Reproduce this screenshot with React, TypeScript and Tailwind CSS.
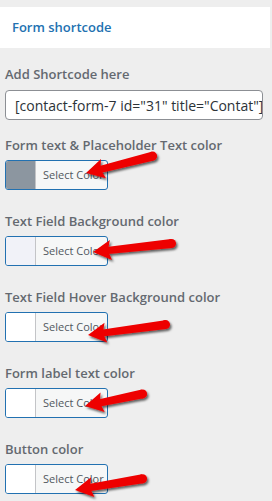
import React from "react";

type Pt = [number, number];

const arrows: { tip: Pt; tail: Pt }[] = [
  { tip: [86, 173], tail: [157, 155] },
  { tip: [93, 252], tail: [176, 243] },
  { tip: [88, 335], tail: [170, 324] },
  { tip: [85, 406], tail: [147, 393] },
  { tip: [75, 490], tail: [147, 478] },
];

function arrowShapes(tip: Pt, tail: Pt) {
  const dx = tail[0] - tip[0];
  const dy = tail[1] - tip[1];
  const len = Math.hypot(dx, dy);
  const ux = dx / len;
  const uy = dy / len;
  const nx = -uy;
  const ny = ux;
  const H = 18;
  const W = 20;
  const bx = tip[0] + ux * H;
  const by = tip[1] + uy * H;
  const head = [
    [tip[0], tip[1]],
    [bx + nx * (W / 2), by + ny * (W / 2)],
    [bx - ux * 3, by - uy * 3],
    [bx - nx * (W / 2), by - ny * (W / 2)],
  ]
    .map((p) => p.join(","))
    .join(" ");
  const sx = tip[0] + ux * (H - 6);
  const sy = tip[1] + uy * (H - 6);
  const ex = tail[0] - ux * 4.5;
  const ey = tail[1] - uy * 4.5;
  const w1 = 3.5;
  const w2 = 4.5;
  const shaft = [
    [sx + nx * w1, sy + ny * w1],
    [ex + nx * w2, ey + ny * w2],
    [ex - nx * w2, ey - ny * w2],
    [sx - nx * w1, sy - ny * w1],
  ]
    .map((p) => p.join(","))
    .join(" ");
  return { head, shaft, ex, ey, w2 };
}

function ColorButton({ swatch }: { swatch: string }) {
  return (
    <div className="flex h-[30px] w-[103px] overflow-hidden rounded-[3px] border border-[#2271b1] bg-[#f6f7f7]">
      <div className="w-[30px] shrink-0 border-r border-[#c3c4c7]" style={{ backgroundColor: swatch }} />
      <div className="flex min-w-0 flex-1 items-center overflow-hidden whitespace-nowrap pl-[7px] text-[11px] text-[#50575e]">
        Select Color
      </div>
    </div>
  );
}

const sections = [
  { label: "Form text & Placeholder Text color", swatch: "#8c96a0" },
  { label: "Text Field Background color", swatch: "#f1f2f8" },
  { label: "Text Field Hover Background color", swatch: "#ffffff" },
  { label: "Form label text color", swatch: "#ffffff" },
  { label: "Button color", swatch: "#ffffff" },
];

export default function App() {
  return (
    <div
      className="relative h-[501px] w-[272px] overflow-hidden bg-[#eeeeee] pt-[7px]"
      style={{ fontFamily: '"Open Sans", "Noto Sans", Arial, sans-serif' }}
    >
      <div className="mr-[2px] flex h-[41px] items-center bg-white px-[12px]">
        <span className="text-[13px] font-semibold text-[#2271b1]">Form shortcode</span>
      </div>
      <div className="px-[5px]">
        <div className="mt-[16px] h-[20px] text-[13px] font-semibold leading-[20px] text-[#646970]">
          Add Shortcode here
        </div>
        <div className="mt-[6px] flex h-[30px] w-[258px] items-center overflow-hidden whitespace-nowrap rounded-[4px] border border-[#8c8f94] bg-white pl-[9px] text-[14px] text-[#2c3338]">
          [contact-form-7 id="31" title="Contat"]
        </div>
        <div className="mt-[15px]">
          {sections.map((s) => (
            <div key={s.label} className="mb-[21px]">
              <div className="h-[20px] whitespace-nowrap text-[13px] font-semibold leading-[20px] text-[#646970]">
                {s.label}
              </div>
              <div className="mt-[5px]">
                <ColorButton swatch={s.swatch} />
              </div>
            </div>
          ))}
        </div>
      </div>
      <svg className="pointer-events-none absolute left-0 top-0" width="272" height="501">
        <defs>
          <filter id="sh" x="-20%" y="-50%" width="140%" height="200%">
            <feDropShadow dx="1.5" dy="2" stdDeviation="1.3" floodColor="#000" floodOpacity="0.6" />
          </filter>
        </defs>
        {arrows.map((a, i) => {
          const { head, shaft, ex, ey, w2 } = arrowShapes(a.tip, a.tail);
          return (
            <g key={i} filter="url(#sh)" fill="#ee0000">
              <polygon points={shaft} />
              <circle cx={ex} cy={ey} r={w2} />
              <polygon points={head} />
            </g>
          );
        })}
      </svg>
    </div>
  );
}
